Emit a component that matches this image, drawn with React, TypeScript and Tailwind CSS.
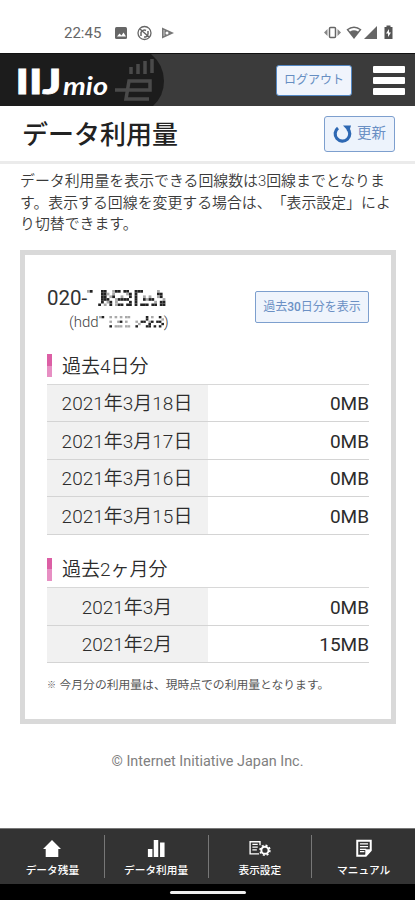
import React from 'react';

interface UsageRow {
  label: string;
  value: string;
}

const DAILY: UsageRow[] = [
  { label: '2021年3月18日', value: '0MB' },
  { label: '2021年3月17日', value: '0MB' },
  { label: '2021年3月16日', value: '0MB' },
  { label: '2021年3月15日', value: '0MB' },
];

const MONTHLY: UsageRow[] = [
  { label: '2021年3月', value: '0MB' },
  { label: '2021年2月', value: '15MB' },
];

// Masked digits, '#' is dark and '+' is grey
const NUMBER_MASK = [
  '+#...##..+##.##..###.....+..',
  '.....##+.+....+#.#.......##.',
  '.....##.+#..+..#.#..+.+..+#.',
  '.....###..+####..#..#+##...+',
  '.....#.+#.+....#.#......+.##',
  '....#.+.#.+##.##.#.###.##.##',
];

const ID_MASK = [
  '+#..+.+.+.++......#.+..#.',
  '..................#.....+',
  '....+..+#.+...+.##.+#.##.',
  '...............+...#....#',
  '....#.+++.++..#...##.#.#.',
];

function Mask({ rows, cellW, cellH }: { rows: string[]; cellW: number; cellH: number }) {
  const cols = Math.max(...rows.map((r) => r.length));
  return (
    <svg width={cols * cellW} height={rows.length * cellH} className="block shrink-0">
      {rows.map((row, y) =>
        row.split('').map((c, x) =>
          c === '.' ? null : (
            <rect key={`${x}-${y}`} x={x * cellW} y={y * cellH} width={cellW} height={cellH} fill={c === '#' ? '#222' : '#aaa'} />
          ),
        ),
      )}
    </svg>
  );
}

function StatusBar() {
  return (
    <div className="h-[53px] flex items-start pt-[24px] pl-[64px] pr-[19px] text-[#666]">
      <span className="w-[50px] text-[15px] leading-[18px]">22:45</span>
      <svg width="60" height="16" viewBox="0 0 60 16" className="mt-px">
        <rect x="1" y="2" width="12" height="12" rx="1.5" fill="#666" />
        <path d="M3 11.5l2.5-3 2 2 2-3 2.5 4z" fill="#fff" />
        <circle cx="30.500" cy="8" r="6.500" fill="none" stroke="#666" strokeWidth="1.300" />
        <path d="M27 11V7.500a3.500 3.500 0 0 1 5-2M34 6v3a3.500 3.500 0 0 1-4 3M26 4l9 8" fill="none" stroke="#666" strokeWidth="1.500" />
        <path d="M48 2.500L60 8 48 13.500z" fill="#777" />
        <circle cx="53" cy="8" r="1.500" fill="#fff" />
        <path d="M50 5v6" stroke="#ddd" strokeWidth=".8" />
      </svg>
      <svg width="72" height="16" viewBox="0 0 72 16" className="ml-auto">
        <rect x="5.500" y="3.500" width="6" height="10" rx="1" fill="none" stroke="#666" strokeWidth="1.500" />
        <path d="M3.500 5v7L0 8.500zM13.500 5v7L17 8.500z" fill="#888" />
        <path d="M22.500 5.500Q30 -.5 37.500 5.500L30 15z" fill="#666" />
        <path d="M24.500 5.800Q30 2 35.500 5.800L34 7.500Q30 5 26 7.500z" fill="#fff" />
        <path d="M40 15L53 2v13z" fill="#666" />
        <path d="M60.500 3h2V1.500h4V3h2v12h-8z" fill="#555" />
        <path d="M65 5l-3 4.500h2V13l3-4.500h-2z" fill="#fff" />
      </svg>
    </div>
  );
}

function Logo() {
  return (
    <svg width="200" height="52" viewBox="0 0 200 52" className="block">
      <path d="M0 0H151Q164 11 164 27Q164 42 153 52H0z" fill="#1c1c1c" />
      <g fill="none" stroke="#4a4a4a">
        <path d="M131 20v-7M138 20V10M145 20V7M152 19V5" strokeWidth="3.500" />
        <path d="M115 36H150V27H129L126 45H149" strokeWidth="3.500" />
      </g>
      <text x="15.500" y="40" fontFamily="Lato" fontWeight="900" fontSize="34" fill="#fff" stroke="#fff" strokeWidth=".8" textLength="46" lengthAdjust="spacingAndGlyphs">
        IIJ
      </text>
      <text x="63" y="40.500" fontFamily="Lato" fontStyle="italic" fontWeight="700" fontSize="24" fill="#fff" textLength="45" lengthAdjust="spacingAndGlyphs">
        mio
      </text>
    </svg>
  );
}

function Header() {
  return (
    <header className="h-[53px] bg-[#3b3b3b] border-t border-[#111] flex items-center pr-[10px]">
      <Logo />
      <button type="button" className="ml-[76px] w-[76px] h-[31px] rounded-[3px] border border-[#5488c4] bg-[#f0f4fc] text-[#668ec2] text-[12px] leading-none">
        ログアウト
      </button>
      <div className="ml-auto w-8 flex flex-col gap-1">
        <div className="h-[7px] rounded-[1px] bg-white" />
        <div className="h-[7px] rounded-[1px] bg-white" />
        <div className="h-[7px] rounded-[1px] bg-white" />
      </div>
    </header>
  );
}

function UsageTable({ title, rows }: { title: string; rows: UsageRow[] }) {
  return (
    <section>
      <div className="h-[23px] flex items-center">
        <div className="w-[4.500px] h-[23px] flex flex-col">
          <div className="flex-1 bg-[#dc5fa5]" />
          <div className="flex-1 bg-[#e78fc3]" />
        </div>
        <h2 className="ml-[10.500px] pt-px text-[19px] leading-[23px] font-[350] text-[#2c2c2c]">{title}</h2>
      </div>
      <div className="mt-[6.500px] border-t-[1.500px] border-[#d8d8d8]">
        {rows.map(({ label, value }) => (
          <div key={label} className="h-[37.500px] flex border-b border-[#d4d4d4] text-[19px] leading-[36px] text-[#2c2c2c]">
            <div className="w-[161px] pt-[1.500px] pr-px bg-[#f1f1f1] text-center font-[350]">{label}</div>
            <div className="flex-1 pt-[1.500px] text-right">{value}</div>
          </div>
        ))}
      </div>
    </section>
  );
}

const NAV = [
  {
    label: 'データ残量',
    icon: <path d="M10 1L20 11h-3v9H3v-9H0z" fill="#fff" />,
  },
  {
    label: 'データ利用量',
    icon: <path d="M1 11h5v9H1zM7.500 1h5v19h-5zM14.500 4h5v16h-5z" fill="#fff" />,
  },
  {
    label: '表示設定',
    icon: (
      <g fill="none" stroke="#fff">
        <path d="M9 16.500H-1V3H10v4" strokeWidth="1.500" />
        <path d="M1.500 6h6M1.500 9h6M1.500 12h5" strokeWidth="1.500" />
        <circle cx="15.500" cy="12.500" r="4" strokeWidth="2.200" />
        <circle cx="15.500" cy="12.500" r="5.500" strokeWidth="1.800" strokeDasharray="2.160 2.160" />
      </g>
    ),
  },
  {
    label: 'マニュアル',
    icon: (
      <g fill="none" stroke="#fff">
        <path d="M2.500 2H17.500V12.500L12 18.500H2.500z" strokeWidth="2.200" />
        <path d="M5.500 5.500h9M5.500 8.500h9M5.500 11.500h7M5.500 14h5" strokeWidth="1.400" />
        <path d="M17.500 12H12v6z" fill="#fff" />
      </g>
    ),
  },
];

function BottomNav() {
  return (
    <nav className="h-[56px] border-t border-[#777] bg-[#333] flex items-center pl-px">
      {NAV.map(({ label, icon }, i) => (
        <div
          key={label}
          className={`h-[43px] flex-1 flex flex-col items-center ${i > 0 ? 'border-l border-[#777]' : ''}`}
        >
          <svg width="24" height="20" viewBox="-2 0 24 20" className="mt-[4px]">
            {icon}
          </svg>
          <span className="mt-[7px] text-[10.700px] leading-[14px] font-medium text-white whitespace-nowrap">{label}</span>
        </div>
      ))}
    </nav>
  );
}

export default function App() {
  return (
    <div lang="ja" className="w-full h-[900px] flex flex-col bg-white overflow-hidden [text-spacing-trim:space-all] font-['Roboto','Noto_Sans_CJK_JP',sans-serif]">
      <StatusBar />
      <Header />

      <div className="h-[58px] border-b-[3px] border-[#ebebeb] flex items-center justify-between pl-[22px] pr-[20px]">
        <h1 className="pt-[3px] text-[26px] leading-[36px] font-medium text-[#222]">データ利用量</h1>
        <button type="button" className="w-[71px] h-[36px] rounded-[3px] border border-[#7d9fce] bg-[#edf3fc] flex items-center pl-[8px] text-[#6b90c4] text-[14.500px]">
          <svg width="19" height="20" viewBox="0 0 19 20" fill="none" stroke="#2e68b3" strokeWidth="3.200">
            <path d="M5 4A7.300 7.300 0 1 0 14.500 4.500" />
            <path d="M10 1.500h8l-2 6.500z" fill="#2e68b3" stroke="none" />
          </svg>
          <span className="ml-[5px] pt-px">更新</span>
        </button>
      </div>

      <p className="mt-[7px] ml-[20px] h-[64px] text-[14.900px] leading-[21.600px] font-[350] text-[#3a3a3a] whitespace-nowrap">
        データ利用量を表示できる回線数は3回線までとなりま
        <br />
        す。表示する回線を変更する場合は、「表示設定」によ
        <br />
        り切替できます。
      </p>

      <main className="mt-[15px] ml-[20px] w-[376px] h-[474px] border-[5px] border-[#d9d9d9] pl-[22px] pr-[22px] pt-[31px]">
        <div className="h-[68px] flex justify-between">
          <div>
            <div className="flex items-center h-[24px] text-[20.500px] leading-[24px] text-[#333]">
              020-
              <Mask rows={NUMBER_MASK} cellW={2.8} cellH={2.7} />
            </div>
            <div className="ml-[22px] flex items-center h-[24px] text-[15px] leading-[24px] font-light text-[#444]">
              (hdd
              <Mask rows={ID_MASK} cellW={2.6} cellH={2.3} />)
            </div>
          </div>
          <button type="button" className="mt-[4.500px] w-[114px] h-[32px] rounded-[2px] border-[1.500px] border-[#7d9fce] bg-[#eff4fc] text-[#6b90c4] text-[12px] whitespace-nowrap">
            過去<b className="font-medium">30</b>日分を表示
          </button>
        </div>
        <UsageTable title="過去4日分" rows={DAILY} />
        <div className="h-[23px]" />
        <UsageTable title="過去2ヶ月分" rows={MONTHLY} />
        <p className="mt-[14px] flex items-center text-[11.800px] leading-[17px] text-[#555] whitespace-nowrap">
          <span className="w-[12.500px] text-[9px] font-bold">※</span>
          今月分の利用量は、現時点での利用量となります。
        </p>
      </main>

      <footer className="mt-[28px] text-center text-[14.400px] leading-[20px] text-[#808080]">© Internet Initiative Japan Inc.</footer>

      <div className="mt-auto">
        <BottomNav />
        <div className="h-[16px] bg-black flex justify-center pt-[7px]">
          <div className="w-[76px] h-[3px] rounded-full bg-[#eee]" />
        </div>
      </div>
    </div>
  );
}
